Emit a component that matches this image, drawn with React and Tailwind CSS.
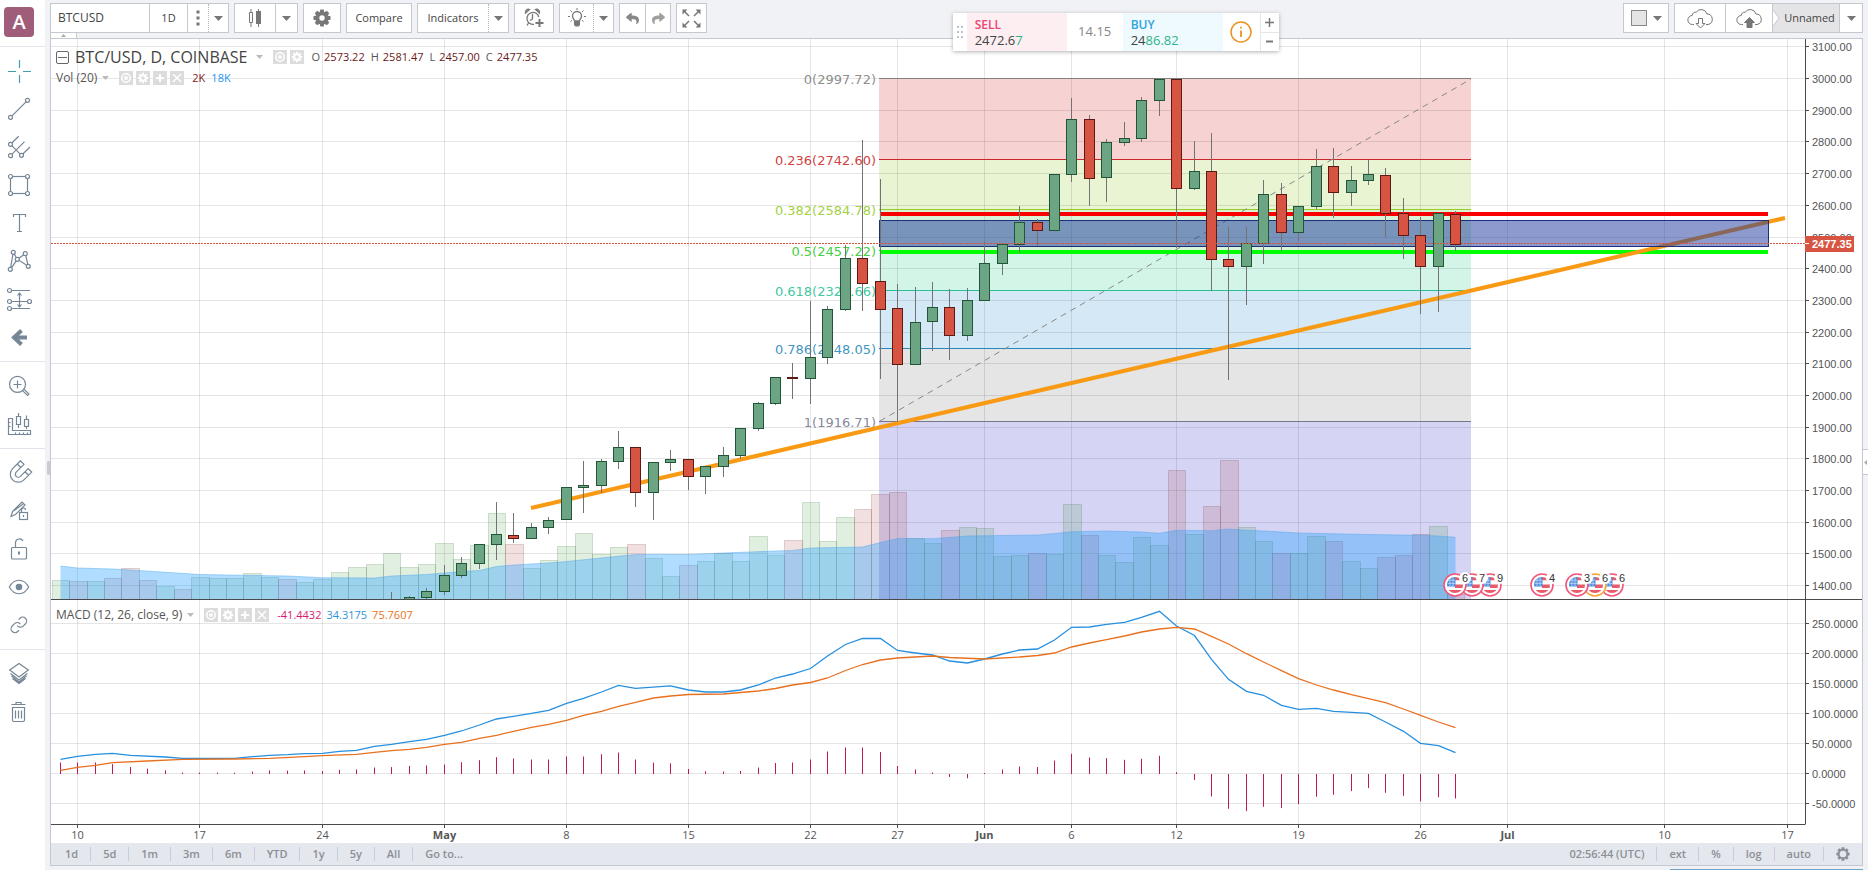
import React from "react";
import { FaReply, FaShare } from "react-icons/fa";

/* ---------- chart data: day index counted from Apr 10 ---------- */

const dayX = (i) => Math.floor(77.9 + 17.44 * i) + 0.5;

// [day, up?, bodyTop, bodyBottom, wickTop, wickBottom]
const CANDLES = [
  [18, 1, 600, 602, 592, 602], [19, 1, 597, 602, 596, 602], [20, 1, 591, 597, 588, 599],
  [21, 1, 575, 591, 565, 595], [22, 1, 563, 575, 557, 578], [23, 1, 544, 563, 544, 569],
  [24, 1, 534, 544, 502, 560], [25, 0, 535, 538, 513, 543], [26, 1, 527, 538, 523, 538],
  [27, 1, 520, 527, 517, 534], [28, 1, 487, 519, 487, 519], [29, 1, 485, 487, 461, 513],
  [30, 1, 461, 485, 459, 493], [31, 1, 447, 461, 431, 469], [32, 0, 447, 492, 447, 507],
  [33, 1, 462, 492, 462, 520], [34, 1, 459, 462, 450, 471], [35, 0, 459, 476, 459, 490],
  [36, 1, 466, 476, 466, 494], [37, 1, 455, 466, 447, 477], [38, 1, 428, 455, 428, 459],
  [39, 1, 403, 428, 402, 431], [40, 1, 377, 403, 377, 405], [41, 0, 377, 378, 363, 399],
  [42, 1, 357, 378, 301, 404], [43, 1, 309, 357, 306, 364], [44, 1, 258, 309, 245, 311],
  [45, 0, 258, 283, 140, 311], [46, 0, 281, 309, 179, 379], [47, 0, 308, 364, 284, 422],
  [48, 1, 322, 364, 287, 364], [49, 1, 307, 321, 282, 351], [50, 0, 307, 335, 289, 360],
  [51, 1, 300, 335, 288, 341], [52, 1, 263, 300, 241, 300], [53, 1, 244, 263, 244, 275],
  [54, 1, 222, 244, 206, 253], [55, 0, 222, 230, 219, 246], [56, 1, 174, 230, 174, 231],
  [57, 1, 119, 174, 98, 182], [58, 0, 119, 178, 115, 206], [59, 1, 142, 177, 139, 202],
  [60, 1, 138, 142, 122, 146], [61, 1, 100, 138, 97, 142], [62, 1, 79, 100, 79, 116],
  [63, 0, 79, 188, 79, 248], [64, 1, 171, 188, 141, 190], [65, 0, 171, 259, 133, 291],
  [66, 0, 259, 266, 227, 380], [67, 1, 243, 266, 227, 305], [68, 1, 194, 243, 180, 264],
  [69, 0, 194, 232, 183, 251], [70, 1, 206, 232, 206, 241], [71, 1, 166, 206, 149, 209],
  [72, 0, 166, 192, 148, 218], [73, 1, 180, 192, 166, 206], [74, 1, 174, 180, 160, 185],
  [75, 0, 175, 213, 168, 237], [76, 0, 213, 235, 198, 259], [77, 0, 235, 266, 217, 314],
  [78, 1, 213, 266, 213, 312], [79, 0, 214, 244, 211, 251],
];

// bar tops, starting at day -1
const VOLUME_TOPS = [
  580, 581, 581, 578, 568, 580, 586, 589, 577, 578, 578, 573, 577, 579, 582, 579, 572, 567, 564, 553,
  567, 564, 543, 559, 545, 513, 544, 568, 560, 546, 533, 554, 547, 544, 558, 576, 565, 561, 553, 561,
  536, 555, 540, 502, 541, 517, 509, 494, 492, 538, 543, 530, 527, 528, 556, 555, 553, 554, 504, 535,
  555, 562, 537, 545, 470, 534, 506, 460, 527, 541, 553, 553, 536, 541, 561, 568, 557, 555, 534, 526, 594,
];
const VOLUME_DOWN = new Set([
  0, 2, 3, 4, 6, 12, 25, 32, 35, 41, 45, 46, 47, 50, 55, 58, 63, 65, 66, 69, 72, 75, 76, 77, 79,
]);

const VOLUME_MA = [
  [-1, 566], [0, 568], [2, 569], [3, 570], [7, 574.5], [12, 576], [14, 577.7], [17, 578], [18, 576],
  [20, 574.5], [21, 573], [22, 571.5], [23, 570.5], [24, 566.5], [25, 565], [27, 563], [28, 561.5],
  [32, 554.5], [35, 554.5], [37, 553], [40, 551], [41, 550.5], [42, 548], [45, 547], [46, 542.5],
  [47, 538.5], [49, 538.7], [51, 536], [55, 535], [56, 533.5], [57, 531.7], [59, 531], [61, 532],
  [62, 533.3], [63, 530.3], [65, 530.7], [66, 529], [67, 530.3], [68, 531], [70, 533], [74, 534.5],
  [77, 535.3], [78, 536], [79, 537.3],
];

const MACD = [
  [-1, 759.3], [0, 756.3], [1, 754.3], [2, 753.3], [3, 755.3], [5, 757], [6, 758.3], [9, 758.3],
  [10, 756.7], [11, 755.3], [12, 754.7], [13, 753.7], [14, 753.3], [15, 751.3], [16, 750.3],
  [17, 746.3], [18, 744.3], [19, 741.7], [20, 739.3], [21, 735.3], [22, 731], [23, 725], [24, 719],
  [25, 716.3], [26, 713.3], [27, 710.3], [28, 703.3], [29, 698.3], [30, 692], [31, 685.3],
  [32, 688.3], [34, 685.8], [35, 690], [36, 692], [37, 692], [38, 690], [39, 685], [40, 678],
  [41, 674], [42, 668.5], [43, 656], [44, 644.5], [45, 638.5], [46, 638.5], [47, 650.5], [48, 653],
  [49, 655], [50, 661], [51, 663], [52, 659], [53, 654], [54, 650], [55, 649], [56, 640],
  [57, 627.3], [58, 627], [59, 624.3], [60, 622.3], [61, 617.3], [62, 611.3], [63, 626],
  [64, 635.5], [65, 659.3], [66, 679.3], [67, 691.3], [68, 695.3], [69, 705.3], [70, 709.3],
  [71, 708.3], [72, 711.3], [73, 712.3], [74, 713.3], [75, 722], [76, 731.3], [77, 743.3],
  [78, 745.7], [79, 752.7],
];

const SIGNAL = [
  [-1, 770.3], [0, 767.3], [1, 765.3], [2, 762.7], [4, 761], [6, 759.3], [9, 759], [11, 758.3],
  [13, 756.7], [14, 755.7], [16, 754.3], [17, 752.3], [18, 750.7], [19, 749.3], [20, 747.3],
  [21, 744.3], [22, 742.3], [23, 738.3], [24, 735.3], [25, 731.3], [26, 727.3], [27, 724.3],
  [28, 720.3], [29, 715.3], [30, 711.3], [31, 706.3], [32, 702.3], [33, 698], [34, 696],
  [35, 694.5], [37, 694], [38, 692.5], [39, 691], [40, 688.5], [41, 685], [42, 682.5], [43, 678],
  [44, 670.5], [45, 664.5], [46, 660], [47, 658], [49, 656], [50, 657.5], [52, 659], [54, 657],
  [55, 655.5], [56, 653], [57, 647], [58, 643], [59, 639.7], [60, 636], [61, 632], [62, 629],
  [63, 627.3], [64, 629], [65, 636.3], [66, 644], [67, 653.7], [68, 662], [69, 670.7],
  [70, 678.7], [71, 685], [72, 690], [73, 694.7], [74, 698.7], [75, 702.7], [76, 709],
  [77, 715.3], [78, 722], [79, 727.7],
];

const PRICES = Array.from({ length: 18 }, (_, k) => 3100 - k * 100);
const priceY = (p) => Math.floor(78.6 + (3000 - p) * 0.3169) + 0.5;
const MACD_TICKS = [250, 200, 150, 100, 50, 0, -50];
const macdY = (v) => Math.floor(773.5 - v * 0.599) + 0.5;

const DATES = [
  [0, "10"], [7, "17"], [14, "24"], [21, "May", 1], [28, "8"], [35, "15"], [42, "22"], [47, "27"],
  [52, "Jun", 1], [57, "6"], [63, "12"], [70, "19"], [77, "26"], [82, "Jul", 1], [91, "10"], [98, "17"],
];

// [label, y, line, band below, band end]
const FIB = [
  ["0(2997.72)", 78.5, "#808080", "#f6d3d2", 159],
  ["0.236(2742.60)", 159.5, "#cc2828", "#e8f4d2", 209],
  ["0.382(2584.78)", 209.5, "#95cc28", "#d9f3d6", 250],
  ["0.5(2457.22)", 250.5, "#28cc28", "#d3f5e8", 290],
  ["0.618(2320.66)", 290.5, "#28c195", "#d4e9f5", 348],
  ["0.786(2148.05)", 348.5, "#2888bb", "#e5e5e5", 421],
  ["1(1916.71)", 421.5, "#77778c", "#d5d4f5", 599],
];

const EVENTS = [
  [1455, 6, "#f2557a"], [1472, 7, "#f2557a"], [1490, 9, "#f2557a"], [1542, 4, "#f2557a"],
  [1577, 3, "#f2557a"], [1595, 6, "#f5a33a"], [1612, 6, "#f2557a"],
];

const toPoints = (rows) => rows.map(([i, y]) => `${dayX(i)},${y}`).join(" ");

function valueAt(rows, day) {
  for (let k = 1; k < rows.length; k++) {
    const [a, ya] = rows[k - 1];
    const [b, yb] = rows[k];
    if (day <= b) return ya + ((yb - ya) * (day - a)) / (b - a);
  }
  return rows[rows.length - 1][1];
}

const DAYS = Array.from({ length: 81 }, (_, k) => k - 1);

function EventFlag({ x, count, color }) {
  return (
    <g>
      <circle cx={x} cy="585" r="11" fill="#fff" stroke={color} strokeWidth="1.6" />
      <g clipPath="url(#flag-clip)" transform={`translate(${x} 585)`}>
        <rect x="-8" y="-8" width="16" height="16" fill="#fff" />
        <path d="M0-6.5h8M0 1.2h8M-8 6.7h16" stroke="#ea5a68" strokeWidth="3.4" />
        <rect x="-8" y="-8" width="8.5" height="9.5" fill="#4f8ede" />
        <path d="M-7-4.8h7M-7-1.6h7M-5-8v9M-2-8v9" stroke="#cfe0f8" strokeWidth=".7" />
      </g>
      <circle cx={x + 10} cy="578" r="6" fill="#fff" />
      <text x={x + 10} y="582" textAnchor="middle" fontSize="11" fill="#333" fontFamily="'Liberation Sans', sans-serif">{count}</text>
    </g>
  );
}

function Chart() {
  return (
    <svg viewBox="51 39 1811 804" className="block h-auto w-full bg-white" role="img" aria-label="BTC/USD daily candles with MACD">
      <defs>
        <clipPath id="price-pane"><rect x="51" y="39" width="1754" height="560" /></clipPath>
        <clipPath id="flag-clip"><circle r="8" /></clipPath>
      </defs>

      <g clipPath="url(#price-pane)">
        {FIB.map(([label, y, , band, end]) => (
          <rect key={label} x="879" y={Math.floor(y)} width="592" height={end - Math.floor(y)} fill={band} />
        ))}
      </g>

      <g stroke="#000" strokeOpacity=".1" strokeWidth="1">
        {PRICES.map((p) => <path key={p} d={`M51 ${priceY(p)}H1805`} />)}
        {MACD_TICKS.map((v) => <path key={v} d={`M51 ${macdY(v)}H1805`} />)}
        {DATES.map(([i]) => <path key={i} d={`M${dayX(i)} 39V824`} />)}
      </g>

      <g clipPath="url(#price-pane)">
        {VOLUME_TOPS.map((top, k) => {
          const day = k - 1;
          const left = Math.round(77.8 + 17.44 * (day - 0.5));
          const right = Math.round(77.8 + 17.44 * (day + 0.5));
          const down = VOLUME_DOWN.has(day);
          return (
            <rect
              key={day} x={left + 0.5} y={top + 0.5} width={right - left} height={610 - top}
              fill={down ? "#a02020" : "#209020"} fillOpacity=".14"
              stroke={down ? "#703030" : "#307030"} strokeOpacity=".2"
            />
          );
        })}
        <polygon points={`${dayX(-1)},600 ${toPoints(VOLUME_MA)} ${dayX(79)},600`} fill="#1d9eff" fillOpacity=".35" />
        <polyline points={toPoints(VOLUME_MA)} fill="none" stroke="#4fa3e6" strokeOpacity=".45" />

        {FIB.map(([label, y, line]) => (
          <g key={label}>
            <path d={`M879 ${y}H1471`} stroke={line} />
            <text x="876" y={y + 5} textAnchor="end" fontSize="13" fill={line} fillOpacity=".9" fontFamily="'DejaVu Sans', sans-serif">{label}</text>
          </g>
        ))}
        <path d="M880 421L1471 79" stroke="#888" strokeDasharray="6 5" />
        <path d="M880 214H1768" stroke="#fa0000" strokeWidth="4" />
        <path d="M880 252H1768" stroke="#00ff00" strokeWidth="4" />
        <path d="M531 508L1785 218" stroke="#f99a14" strokeWidth="4" />
        <rect x="879.5" y="220.5" width="889" height="26" fill="#19359d" fillOpacity=".5" stroke="#1b2f7d" />

        {CANDLES.map(([i, up, top, bottom, high, low]) => (
          <g key={i}>
            <path d={`M${dayX(i)} ${high}V${low}`} stroke="#737375" />
            <rect
              x={dayX(i) - 5} y={top + 0.5} width="10" height={bottom - top}
              fill={up ? "#6ba583" : "#d75442"} stroke={up ? "#225437" : "#5b1a13"}
            />
          </g>
        ))}
        <path d="M51 243.5H1805" stroke="#d75442" strokeDasharray="2 1" />
      </g>

      <g>
        {DAYS.map((d) => {
          const y = 773.5 - (valueAt(SIGNAL, d) - valueAt(MACD, d));
          return <path key={d} d={`M${dayX(d)} 774V${Math.abs(y - 774) < 1 ? 773 : y}`} stroke="#c2185b" />;
        })}
        <polyline points={toPoints(MACD)} fill="none" stroke="#2690e0" strokeWidth="1.300" />
        <polyline points={toPoints(SIGNAL)} fill="none" stroke="#e8711f" strokeWidth="1.300" />
      </g>

      <g stroke="#4a4a4a">
        <path d="M51 599.5H1862M51 824.5H1805.5M1805.5 39V824" />
        {PRICES.map((p) => <path key={p} d={`M1805 ${priceY(p)}h4`} />)}
        {MACD_TICKS.map((v) => <path key={v} d={`M1805 ${macdY(v)}h4`} />)}
        {DATES.map(([i]) => <path key={i} d={`M${dayX(i)} 824v4`} />)}
      </g>
      <g fontSize="11" fill="#555" fontFamily="'Liberation Sans', sans-serif">
        {PRICES.map((p) => <text key={p} x="1812" y={priceY(p) + 4}>{p.toFixed(2)}</text>)}
        {MACD_TICKS.map((v) => <text key={v} x="1812" y={macdY(v) + 4}>{v.toFixed(4)}</text>)}
      </g>
      <g fontSize="11" fill="#555" textAnchor="middle">
        {DATES.map(([i, label, strong]) => (
          <text key={i} x={dayX(i)} y="839" fontWeight={strong ? 700 : 400}>{label}</text>
        ))}
      </g>

      <rect x="1805" y="236" width="49" height="16" fill="#d75442" />
      <path d="M1805 243.5h4" stroke="#fff" />
      <text x="1812" y="248" fontSize="11" fontWeight="700" fill="#fff" fontFamily="'Liberation Sans', sans-serif">2477.35</text>

      {[...EVENTS].reverse().map(([x, count, color]) => <EventFlag key={x} x={x} count={count} color={color} />)}
    </svg>
  );
}

/* ---------- small pieces ---------- */

const Caret = ({ className = "text-[#777]" }) => (
  <svg width="9" height="5" viewBox="0 0 9 5" className={className} aria-hidden="true">
    <path d="M0 0h9L4.500 5z" fill="currentColor" />
  </svg>
);

function Gear({ size = 18, outline = false }) {
  const teeth = [0, 45, 90, 135, 180, 225, 270, 315];
  return (
    <svg width={size} height={size} viewBox="-10 -10 20 20" fill="currentColor" aria-hidden="true">
      {teeth.map((a) => <path key={a} d="M-1.900-9.500h3.800l.8 4h-5.400z" transform={`rotate(${a})`} />)}
      <circle r={outline ? 5.8 : 5} fill="none" stroke="currentColor" strokeWidth={outline ? 2 : 4} />
    </svg>
  );
}

function ToolGroup({ children }) {
  return <div className="flex h-[30px] border border-[#c5c8d0] bg-white">{children}</div>;
}

function Tool({ label, className = "", tone = "text-[#777]", children }) {
  return (
    <button type="button" aria-label={label} className={`flex h-full items-center justify-center ${tone} ${className}`}>
      {children}
    </button>
  );
}

const solid = "border-l border-[#c5c8d0]";
const dotted = "border-l border-dotted border-[#b5b8c0]";

function LegendButtons({ count }) {
  const glyphs = [
    ["Hide", <g key="h" fill="none" stroke="#fff" strokeWidth="1.500"><circle cx="7" cy="7" r="4.200" /><circle cx="7" cy="7" r="1.200" /></g>],
    ["Format", <g key="f" transform="translate(7 7) scale(.55)" fill="#fff">{[0, 45, 90, 135, 180, 225, 270, 315].map((a) => <path key={a} d="M-1.800-9.500h3.600v4h-3.600z" transform={`rotate(${a})`} />)}<circle r="5" fill="none" stroke="#fff" strokeWidth="3.500" /></g>],
    ["Add", <path key="a" d="M7 3v8M3 7h8" stroke="#fff" strokeWidth="2" />],
    ["Remove", <path key="r" d="M3 3l8 8M11 3l-8 8" stroke="#fff" strokeWidth="1.500" />],
  ];
  return (
    <div className="flex gap-[3px]">
      {glyphs.slice(0, count).map(([name, glyph]) => (
        <button key={name} type="button" aria-label={name} className="h-[14px] w-[14px] bg-[#dcdcdc]">
          <svg width="14" height="14" viewBox="0 0 14 14" aria-hidden="true">{glyph}</svg>
        </button>
      ))}
    </div>
  );
}

/* ---------- left sidebar ---------- */

const Dot = ({ x, y }) => <circle cx={x} cy={y} r="2" fill="#fff" />;

const ICONS = {
  Crosshair: <path d="M19.500 8v8M19.500 23v8M8 19.500h8M23 19.500h8" stroke="#3f9fae" />,
  "Trend line": <><path d="M10.500 27.300L27.500 10.300" /><Dot x={10.5} y={27.3} /><Dot x={27.5} y={10.3} /></>,
  Pitchfork: <><path d="M10.500 16.300l11 11M10.500 16.300l8.200-8M10.500 27.700l14-14M21.500 27.300L30 19" /><Dot x={10.5} y={16.3} /><Dot x={10.5} y={27.7} /><Dot x={21.5} y={27.3} /></>,
  Rectangle: <><rect x="10.500" y="10.500" width="17" height="17" /><Dot x={10.5} y={10.5} /><Dot x={27.5} y={10.5} /><Dot x={10.5} y={27.5} /><Dot x={27.5} y={27.5} /></>,
  Text: <path d="M13.500 13v-2.500h12V13M19.500 10.500v17M17 27.500h5" />,
  Pattern: <><path d="M10.300 27.300l3-17 4 7 8-5.600 3 12.600-11-7z" /><Dot x={13.3} y={10.3} /><Dot x={25.3} y={11.7} /><Dot x={17.3} y={17.3} /><Dot x={10.3} y={27.3} /><Dot x={28.3} y={24.3} /></>,
  "Price range": <><path d="M9.500 10.500H30M9.500 21.500H29M9.500 28.500H30M19.500 13v14M17.500 15.500l2-2.500 2 2.500M17.500 24.500l2 2.500 2-2.500" /><Dot x={9.5} y={10.5} /><Dot x={9.5} y={21.5} /><Dot x={29.5} y={21.5} /><Dot x={9.5} y={28.5} /></>,
  "Arrow left": <path d="M27 19.500H15M21.500 12.500L14 19.500l7.500 7" strokeWidth="4" />,
  "Zoom in": <><circle cx="17.500" cy="17.300" r="8" /><path d="M17.500 13.500v8M13.500 17.500h8M22.800 23.800l4.700 4.700 1.400-1.400-4.700-4.700" /></>,
  Measure: <><path d="M8.500 13.500h4v12h18v4h-22zM8.500 17.500h2M8.500 21.500h2M15.500 29.500v-2M19.500 29.500v-2M23.500 29.500v-2M27.500 29.500v-2" /><path d="M16.500 11.500h4v8h-4zM18.500 8v3.500M18.500 19.500V23M24.500 14.500h4v7h-4zM26.500 10.500v4M26.500 21.500V24" /></>,
  Magnet: <path transform="translate(19 19.500) rotate(45)" d="M-8-10V1a8 8 0 0 0 16 0v-11H3V1a3 3 0 0 1-6 0v-11zM-8-5.500h5M3-5.500h5" />,
  "Drawing mode": <><path d="M11 24.500l1.500-5L22 10l3 3-9.500 9.500zM13.500 19l9.500-7" /><rect x="19.500" y="20.500" width="8" height="7" fill="#fff" /><path d="M21.500 20.500v-2.500a2 2 0 0 1 4 0M23.500 23v2" /></>,
  Lock: <><rect x="11.500" y="17.500" width="15" height="11.500" rx="1" /><path d="M15.500 17.500v-5a4 4 0 0 1 7.500-1.500" /><path d="M19 21.500v3" strokeWidth="2" /></>,
  Visibility: <><path d="M9.300 19c5-9 14.400-9 19.400 0-5 9-14.400 9-19.400 0z" /><circle cx="19" cy="19" r="3.300" fill="#758696" stroke="none" /></>,
  Link: <g transform="translate(9.500 9.500) scale(.78)" strokeWidth="1.500"><path d="M10 13a5 5 0 0 0 7.540.54l3-3a5 5 0 0 0-7.070-7.070l-1.720 1.710" /><path d="M14 11a5 5 0 0 0-7.540-.54l-3 3a5 5 0 0 0 7.070 7.070l1.710-1.710" /></g>,
  Layers: <path d="M9.700 15l9.300-6.500 9.300 6.500-9.300 7zM10.500 18.500l8.500 6.500 8.500-6.500M11.500 21l7.500 6 7.500-6M12.500 23.500l6.500 5 6.500-5" />,
  Delete: <path d="M11.500 11.500h14M16 11V9.500h5V11M12.500 14.500h12v12.500a1.500 1.500 0 0 1-1.500 1.500h-9a1.500 1.500 0 0 1-1.500-1.500zM15.500 17.500v8M18.500 17.500v8M21.500 17.500v8" />,
};

const SIDEBAR = [
  ["Crosshair", "Trend line", "Pitchfork", "Rectangle", "Text", "Pattern", "Price range", "Arrow left"],
  ["Zoom in", "Measure"],
  ["Magnet", "Drawing mode", "Lock", "Visibility", "Link"],
  ["Layers", "Delete"],
];

function Sidebar() {
  return (
    <aside className="w-[45px] shrink-0 bg-white">
      <div className="pt-[7px] pb-[9px] pl-1">
        <div className="flex h-[30px] w-[30px] items-center justify-center rounded-sm bg-[#a05d79] text-[20px] font-semibold text-white">A</div>
      </div>
      {SIDEBAR.map((group) => (
        <div key={group[0]} className="border-t border-[#e0e4ea] py-[5px]">
          {group.map((name) => (
            <button key={name} type="button" aria-label={name} className="block h-[38px] w-[38px]">
              <svg width="38" height="38" viewBox="0 0 38 38" fill="none" stroke="#758696" strokeWidth="1.200" aria-hidden="true">{ICONS[name]}</svg>
            </button>
          ))}
        </div>
      ))}
    </aside>
  );
}

/* ---------- top toolbar ---------- */

const CLOUD = "M7 18.500H5.500a4.500 4.500 0 0 1-.3-9 3.500 3.500 0 0 1 4-3.300A6 6 0 0 1 20 8a5.300 5.300 0 0 1 1 10.500h-2";

function Toolbar() {
  return (
    <header className="flex h-[38px] items-start gap-[5px] pt-[3px] pr-[5px] pl-[5px] text-[11px] text-[#444]">
      <ToolGroup>
        <input aria-label="Symbol" defaultValue="BTCUSD" className="w-[98px] bg-white pl-[7px] text-[12px] text-[#444] outline-none" />
        <Tool label="Interval" tone="text-[#444]" className={`w-[38px] ${solid}`}>1D</Tool>
        <Tool label="More intervals" className={`w-[21px] ${solid}`}>
          <svg width="4" height="16" viewBox="0 0 4 16" fill="currentColor" aria-hidden="true"><path d="M.5.5h3v3h-3zM.5 6.500h3v3h-3zM.5 12.500h3v3h-3z" /></svg>
        </Tool>
        <Tool label="Interval menu" className={`w-[20px] ${dotted}`}><Caret /></Tool>
      </ToolGroup>
      <ToolGroup>
        <Tool label="Candles" className="w-[40px]">
          <svg width="14" height="20" viewBox="0 0 14 20" aria-hidden="true"><path d="M1.500 4.500h3v10h-3zM3 1v3.500M3 14.500V19" fill="none" stroke="currentColor" /><path d="M8 3h5v13H8zM10 1h1v18h-1z" fill="currentColor" /></svg>
        </Tool>
        <Tool label="Chart style menu" className={`w-[22px] ${solid}`}><Caret /></Tool>
      </ToolGroup>
      <ToolGroup><Tool label="Properties" className="w-[36px]"><Gear /></Tool></ToolGroup>
      <ToolGroup><button type="button" className="w-[64px]">Compare</button></ToolGroup>
      <ToolGroup>
        <button type="button" className="w-[70px]">Indicators</button>
        <Tool label="Indicator templates" className={`w-[20px] ${dotted}`}><Caret /></Tool>
      </ToolGroup>
      <ToolGroup>
        <Tool label="Add alert" className="w-[38px]">
          <svg width="20" height="20" viewBox="0 0 20 20" fill="none" stroke="currentColor" strokeWidth="1.300" aria-hidden="true">
            <path d="M14.800 9A6 6 0 1 0 10 16.300M8.500 6v5L6 12.500M1.500 5a3 3 0 0 1 4-3.500zM15.500 5a3 3 0 0 0-4-3.500zM4.500 15L3 17.500" />
            <path d="M15.500 11v8M11.500 15h8" strokeWidth="2" />
          </svg>
        </Tool>
      </ToolGroup>
      <ToolGroup>
        <Tool label="Publish idea" className="w-[33px]">
          <svg width="20" height="20" viewBox="0 0 20 20" fill="none" stroke="currentColor" aria-hidden="true">
            <path d="M7.500 13c0-1.500-2-2.500-2-5a4.500 4.500 0 0 1 9 0c0 2.500-2 3.500-2 5z" strokeWidth="1.300" />
            <path d="M7 13h6v4l-1.500 1.500h-3L7 17z" fill="currentColor" stroke="none" />
            <path d="M10 0v2M3.500 2.500L5 4M16.500 2.500L15 4M1 8.500h2M17 8.500h2M3.500 13.500L5 12.300M16.500 13.500L15 12.300" />
          </svg>
        </Tool>
        <Tool label="Ideas menu" className={`w-[20px] ${dotted}`}><Caret /></Tool>
      </ToolGroup>
      <ToolGroup>
        <Tool label="Undo" tone="text-[#888]" className="w-[25px]"><FaReply size={13} /></Tool>
        <Tool label="Redo" tone="text-[#a0a0a0]" className={`w-[25px] ${solid}`}><FaShare size={13} /></Tool>
      </ToolGroup>
      <ToolGroup>
        <Tool label="Fullscreen" className="w-[29px]">
          <svg width="19" height="19" viewBox="0 0 19 19" fill="currentColor" stroke="currentColor" aria-hidden="true">
            <path d="M2.500 2.500l4.500 4.500M16.500 2.500L12 7M2.500 16.500L7 12M16.500 16.500L12 12" strokeWidth="1.500" />
            <path d="M.5.5h5l-5 5zM18.500.5v5l-5-5zM.5 18.500v-5l5 5zM18.500 18.500h-5l5-5z" stroke="none" />
          </svg>
        </Tool>
      </ToolGroup>

      <div className="ml-auto flex gap-[5px]">
        <ToolGroup>
          <Tool label="Layout" className="w-[44px] gap-[6px]">
            <span className="h-[16px] w-[16px] border border-[#888] bg-[#e4e4e4]" />
            <Caret />
          </Tool>
        </ToolGroup>
        <ToolGroup>
          <Tool label="Load layout" className="w-[50px]">
            <svg width="26" height="24" viewBox="0 0 26 24" fill="none" stroke="currentColor" aria-hidden="true"><path d={CLOUD} /><path d="M11.500 12.500h4v5H18l-4.500 4.500L9 17.500h2.500z" /></svg>
          </Tool>
          <Tool label="Save layout" className={`w-[47px] ${solid}`}>
            <svg width="26" height="24" viewBox="0 0 26 24" fill="none" stroke="currentColor" aria-hidden="true"><path d={CLOUD} /><path d="M11 21.500v-5H8.500l5-5 5 5H16v5z" fill="currentColor" /></svg>
          </Tool>
          <button type="button" className="flex h-full w-[67px] items-center border-l border-[#c5c8d0] bg-[#e4e4e6]">
            <svg width="7" height="16" viewBox="0 0 7 16" aria-hidden="true"><path d="M0 0l6 8-6 8z" fill="#fff" /><path d="M0 0l6 8-6 8" fill="none" stroke="#c5c8d0" /></svg>
            <span className="flex-1 text-center">Unnamed</span>
          </button>
          <Tool label="Layout menu" className={`w-[23px] ${solid}`}><Caret /></Tool>
        </ToolGroup>
      </div>
    </header>
  );
}

function TradePanel() {
  return (
    <div className="absolute top-[13px] left-[51%] flex h-[38px] items-stretch bg-white text-[#444] shadow-[0_1px_4px_rgba(0,0,0,0.3)]">
      <span className="flex w-[14px] items-center justify-center">
        <svg width="6" height="12" viewBox="0 0 6 12" fill="#bcc3cc" aria-hidden="true"><path d="M0 0h2v2H0zM4 0h2v2H4zM0 5h2v2H0zM4 5h2v2H4zM0 10h2v2H0zM4 10h2v2H4z" /></svg>
      </span>
      <button type="button" className="w-[100px] bg-[#fdeef1] pl-2 text-left">
        <span className="block text-[12px] leading-[15px] font-semibold text-[#ef4472]">SELL</span>
        <span className="block text-[13px] leading-[16px]">2472.6<span className="text-[#2fb489]">7</span></span>
      </button>
      <span className="flex w-[56px] items-center justify-center text-[13px] text-[#888]">14.15</span>
      <button type="button" className="w-[100px] bg-[#effafe] pl-2 text-left">
        <span className="block text-[12px] leading-[15px] font-semibold text-[#2ba3dd]">BUY</span>
        <span className="block text-[13px] leading-[16px]">24<span className="text-[#2fb489]">86.82</span></span>
      </button>
      <button type="button" aria-label="Order info" className="flex w-[37px] items-center justify-center">
        <svg width="22" height="22" viewBox="0 0 22 22" fill="none" stroke="#ea9324" strokeWidth="1.500" aria-hidden="true"><circle cx="11" cy="11" r="10" /><path d="M11 9.500V16M11 5.800v1.800" strokeWidth="1.800" /></svg>
      </button>
      <span className="flex w-[19px] flex-col border-l border-[#e4e6ea] text-[#777]">
        <button type="button" aria-label="Increase" className="flex flex-1 items-center justify-center border-b border-[#e4e6ea]"><svg width="9" height="9" viewBox="0 0 9 9" aria-hidden="true"><path d="M4.500 0v9M0 4.500h9" stroke="currentColor" strokeWidth="1.500" /></svg></button>
        <button type="button" aria-label="Decrease" className="flex flex-1 items-center justify-center"><svg width="9" height="9" viewBox="0 0 9 9" aria-hidden="true"><path d="M1 4.500h7" stroke="currentColor" strokeWidth="2" /></svg></button>
      </span>
    </div>
  );
}

function Legends() {
  const ohlc = [["O", "2573.22"], ["H", "2581.47"], ["L", "2457.00"], ["C", "2477.35"]];
  return (
    <>
      <div className="absolute top-[7px] left-[5px] text-[11px] text-[#555]">
        <div className="flex h-[22px] items-center">
          <button type="button" aria-label="Collapse legend" className="mr-[6px] flex h-[13px] w-[13px] items-center justify-center rounded-[2px] border border-[#666]">
            <span className="h-px w-[9px] bg-[#666]" />
          </button>
          <h1 className="text-[16px] leading-[22px] text-[#444]">BTC/USD, D, COINBASE</h1>
          <Caret className="ml-[8px] mr-[10px] h-[4px] w-[7px] text-[#bbb]" />
          <LegendButtons count={2} />
          <dl className="ml-[8px] flex gap-[6px]">
            {ohlc.map(([k, v]) => (
              <div key={k} className="flex gap-1"><dt>{k}</dt><dd className="text-[#6b1a1a]">{v}</dd></div>
            ))}
          </dl>
        </div>
        <div className="flex h-[20px] items-center">
          <span className="text-[12px]">Vol (20)</span>
          <Caret className="ml-[5px] mr-[10px] h-[4px] w-[7px] text-[#bbb]" />
          <LegendButtons count={4} />
          <span className="ml-[8px] text-[#802020]">2K</span>
          <span className="ml-[6px] text-[#2196f3]">18K</span>
        </div>
      </div>
      <div className="absolute top-[70.4%] left-[5px] flex h-[20px] items-center text-[11px] text-[#555]">
        <span className="text-[12px]">MACD (12, 26, close, 9)</span>
        <Caret className="ml-[5px] mr-[10px] h-[4px] w-[7px] text-[#bbb]" />
        <LegendButtons count={4} />
        <span className="ml-[8px] text-[#d81b70]">-41.4432</span>
        <span className="ml-[5px] text-[#2e93da]">34.3175</span>
        <span className="ml-[5px] text-[#e8711c]">75.7607</span>
      </div>
    </>
  );
}

function BottomBar() {
  const ranges = ["1d", "5d", "1m", "3m", "6m", "YTD", "1y", "5y", "All", "Go to..."];
  const scales = ["ext", "%", "log", "auto"];
  const item = "flex h-[14px] items-center px-3";
  return (
    <footer className="flex h-[23px] items-center border-b border-[#c5c8d0] bg-[#e4e7ed] text-[11px] font-semibold text-[#8b8f96]">
      <nav aria-label="Date range" className="flex divide-x divide-[#c8ccd4] pl-[2px]">
        {ranges.map((r) => <button key={r} type="button" className={item}>{r}</button>)}
      </nav>
      <div className="ml-auto flex divide-x divide-[#c8ccd4]">
        <span className={item}>02:56:44 (UTC)</span>
        {scales.map((s) => <button key={s} type="button" className={item}>{s}</button>)}
        <button type="button" aria-label="Scale settings" className={item}><Gear size={14} outline /></button>
      </div>
    </footer>
  );
}

export default function App() {
  return (
    <div className="relative flex min-h-screen bg-[#f1f2f6] font-['Open_Sans',sans-serif]">
      <Sidebar />
      <div className="flex min-w-0 flex-1 flex-col">
        <Toolbar />
        <div className="flex">
          <div className="flex w-[5px] items-center justify-end pt-[32px]">
            <svg width="3" height="14" viewBox="0 0 3 14" aria-hidden="true"><path d="M3 0a7 7 0 0 0 0 14z" fill="#c9ccd1" /></svg>
          </div>
          <main className="min-w-0 flex-1 border-x border-t border-[#c5c8d0]">
            <div className="relative">
              <Chart />
              <Legends />
            </div>
            <BottomBar />
          </main>
          <div className="flex w-[5px] items-center pt-[20px]">
            <button type="button" aria-label="Open side panel" className="flex h-[26px] w-[5px] items-center justify-center border-y border-[#c5c8d0] bg-white">
              <svg width="3" height="5" viewBox="0 0 3 5" aria-hidden="true"><path d="M3 0v5L0 2.500z" fill="#aaa" /></svg>
            </button>
          </div>
        </div>
        <div className="mt-auto mr-[5px] h-px w-[193px] self-end bg-[#6fa3c8]" />
      </div>
      <button type="button" aria-label="Hide toolbar" className="absolute top-[33px] left-[50px] flex h-[5px] w-[27px] items-center justify-center border-x border-[#c5c8d0] bg-white">
        <svg width="5" height="3" viewBox="0 0 5 3" aria-hidden="true"><path d="M0 3h5L2.500 0z" fill="#aaa" /></svg>
      </button>
      <TradePanel />
    </div>
  );
}
